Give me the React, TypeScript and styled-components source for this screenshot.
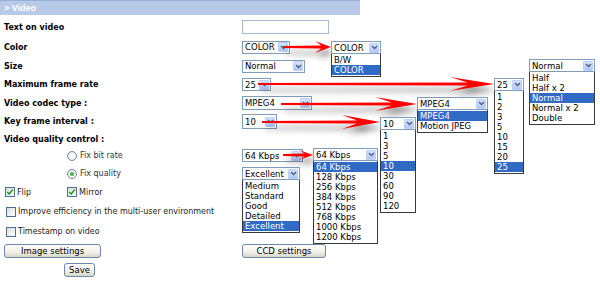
import React from "react";
import styled, { createGlobalStyle } from "styled-components";

const GlobalStyle = createGlobalStyle`
  body {
    margin: 0;
    background: #fff;
  }
`;

const Page = styled.div`
  position: relative;
  width: 600px;
  height: 285px;
  overflow: hidden;
  background: #fff;
  color: #000;
  font-family: "DejaVu Sans", Verdana, sans-serif;
`;

const Header = styled.div`
  width: 360px;
  height: 15px;
  box-sizing: border-box;
  display: flex;
  align-items: center;
  padding-left: 4px;
  background: #b8cae8;
  border-top: 1px solid #98afd7;
  color: #fff;
  font: bold 9px "Liberation Sans", Arial, sans-serif;
`;

const Row = styled.div<{ $h: number; $top?: number }>`
  display: grid;
  grid-template-columns: 242px 1fr;
  align-items: center;
  height: ${({ $h }) => $h}px;
  margin-top: ${({ $top }) => $top || 0}px;
`;

const Label = styled.div`
  padding-left: 4px;
  font-size: 8px;
  font-weight: bold;
  white-space: nowrap;
`;

const Cell = styled.div<{ $indent?: number }>`
  position: relative;
  display: flex;
  align-items: center;
  padding-left: ${({ $indent }) => $indent || 0}px;
  font-size: 8px;
  white-space: nowrap;
`;

const TextBox = styled.div`
  width: 87px;
  height: 14px;
  box-sizing: border-box;
  border: 1px solid #a5b9d5;
  background: #fff;
`;

const SelectBox = styled.div<{ $w: number; $h?: number }>`
  width: ${({ $w }) => $w}px;
  height: ${({ $h }) => $h || 13}px;
  box-sizing: border-box;
  display: flex;
  align-items: center;
  justify-content: space-between;
  padding: 0 1px 0 2px;
  border: 1px solid #7f9db9;
  background: #fff;
  font-size: 8.5px;
  line-height: 10px;
`;

const ArrowBtn = styled.span`
  width: 10px;
  height: 10px;
  box-sizing: border-box;
  display: flex;
  align-items: center;
  justify-content: center;
  background: linear-gradient(#d6e2fe, #b3c8f8);
  border: 1px solid #bccefb;
  border-radius: 1px;
`;

const ListBox = styled.div<{ $w: number }>`
  width: ${({ $w }) => $w}px;
  box-sizing: border-box;
  border: 1px solid #3a3a3a;
  border-top: none;
  background: #fff;
  padding: 1px 0;
`;

const Item = styled.div<{ $sel: boolean; $ih: number }>`
  height: ${({ $ih }) => $ih}px;
  line-height: ${({ $ih }) => $ih}px;
  padding-left: 2px;
  font-size: 8.5px;
  white-space: nowrap;
  background: ${({ $sel }) => ($sel ? "#316ac5" : "transparent")};
  color: ${({ $sel }) => ($sel ? "#fff" : "#000")};
`;

const Floating = styled.div<{ $x: number; $y: number }>`
  position: absolute;
  left: ${({ $x }) => $x}px;
  top: ${({ $y }) => $y}px;
  font-family: "DejaVu Sans", Verdana, sans-serif;
  z-index: 2;
`;

const BelowList = styled.div`
  position: absolute;
  left: 0;
  top: 100%;
  z-index: 1;
`;

const CheckItem = styled.label<{ $w?: number }>`
  display: flex;
  align-items: center;
  gap: 2px;
  width: ${({ $w }) => ($w ? `${$w}px` : "auto")};
  font-size: 8px;
  color: #222;
`;

const Box = styled.span`
  width: 10px;
  height: 10px;
  box-sizing: border-box;
  display: inline-flex;
  align-items: center;
  justify-content: center;
  border: 1px solid #4f6d99;
  background: linear-gradient(135deg, #dcdcd6, #fff);
`;

const RadioDot = styled.span`
  width: 10px;
  height: 10px;
  box-sizing: border-box;
  display: inline-flex;
  align-items: center;
  justify-content: center;
  border: 1px solid #6f88ad;
  border-radius: 50%;
  background: radial-gradient(circle at 60% 60%, #fff, #e4e4de);
  margin-right: 3px;
`;

const Dot = styled.span`
  width: 4px;
  height: 4px;
  border-radius: 50%;
  background: #3cb43c;
`;

const Radio = styled.div`
  display: flex;
  align-items: center;
  font-size: 8px;
  color: #333;
`;

const Button = styled.div<{ $w: number }>`
  width: ${({ $w }) => $w}px;
  height: 14px;
  box-sizing: border-box;
  display: flex;
  align-items: center;
  justify-content: center;
  border: 1px solid #6e87ab;
  border-radius: 3px;
  background: linear-gradient(#fefefe, #f2f1ea 60%, #d9d6c9);
  font-size: 8.5px;
  color: #000;
`;

const Overlay = styled.svg`
  position: absolute;
  left: 0;
  top: 0;
  pointer-events: none;
  z-index: 1;
`;

const Chevron = () => (
  <svg width="7" height="5" viewBox="0 0 7 5">
    <path d="M1 1 L3.5 3.5 L6 1" fill="none" stroke="#4d6185" strokeWidth="1.5" />
  </svg>
);

const Tick = () => (
  <svg width="8" height="8" viewBox="0 0 8 8">
    <path d="M1.3 4 L3.2 6 L6.8 1.6" fill="none" stroke="#21a121" strokeWidth="1.6" />
  </svg>
);

type SelectProps = { value: string; w: number; h?: number };

const Select = ({ value, w, h }: SelectProps) => (
  <SelectBox $w={w} $h={h}>
    <span>{value}</span>
    <ArrowBtn>
      <Chevron />
    </ArrowBtn>
  </SelectBox>
);

type ListProps = { items: string[]; sel: number; w: number; ih?: number };

const List = ({ items, sel, w, ih = 10 }: ListProps) => (
  <ListBox $w={w}>
    {items.map((it, i) => (
      <Item key={it} $sel={i === sel} $ih={ih}>
        {it}
      </Item>
    ))}
  </ListBox>
);

const dropdowns = [
  { x: 331, y: 41, w: 50, ih: 10, sel: 1, items: ["B/W", "COLOR"] },
  { x: 529, y: 59, w: 66, ih: 10, sel: 2, items: ["Half", "Half x 2", "Normal", "Normal x 2", "Double"] },
  { x: 494, y: 78, w: 30, ih: 10, sel: 7, items: ["1", "2", "3", "5", "10", "15", "20", "25"] },
  { x: 417, y: 97, w: 71, ih: 10, sel: 0, items: ["MPEG4", "Motion JPEG"] },
  { x: 380, y: 117, w: 36, ih: 10, sel: 3, items: ["1", "3", "5", "10", "30", "60", "90", "120"] },
  {
    x: 313, y: 148, w: 65, ih: 10, sel: 0,
    items: ["64 Kbps", "128 Kbps", "256 Kbps", "384 Kbps", "512 Kbps", "768 Kbps", "1000 Kbps", "1200 Kbps"],
  },
];

// red callout arrows: tail x, tip x, y, head length, head half-height
const arrows = [
  { x0: 283, x1: 331, y: 47, head: 16, half: 6 },
  { x0: 258, x1: 494, y: 84, head: 44, half: 7 },
  { x0: 281, x1: 417, y: 104, head: 42, half: 7 },
  { x0: 262, x1: 380, y: 122, head: 38, half: 7 },
  { x0: 283, x1: 313, y: 155, head: 14, half: 5 },
];

const arrowPoints = (a: (typeof arrows)[number]) => {
  const xh = a.x1 - a.head;
  const notch = xh + a.head * 0.4;
  return [
    [a.x0, a.y - 1],
    [notch, a.y - 1.5],
    [xh, a.y - a.half],
    [a.x1, a.y],
    [xh, a.y + a.half],
    [notch, a.y + 1.5],
    [a.x0, a.y + 1],
  ]
    .map((p) => p.join(","))
    .join(" ");
};

const App: React.FC = () => {
  return (
    <Page>
      <GlobalStyle />
      <Header>&gt; Video</Header>

      <Row $h={20} $top={2}>
        <Label>Text on video</Label>
        <Cell>
          <TextBox />
        </Cell>
      </Row>
      <Row $h={20}>
        <Label>Color</Label>
        <Cell>
          <Select value="COLOR" w={48} />
        </Cell>
      </Row>
      <Row $h={18}>
        <Label>Size</Label>
        <Cell>
          <Select value="Normal" w={63} />
        </Cell>
      </Row>
      <Row $h={19}>
        <Label>Maximum frame rate</Label>
        <Cell>
          <Select value="25" w={29} />
        </Cell>
      </Row>
      <Row $h={18}>
        <Label>Video codec type :</Label>
        <Cell>
          <Select value="MPEG4" w={70} h={14} />
        </Cell>
      </Row>
      <Row $h={19}>
        <Label>Key frame interval :</Label>
        <Cell>
          <Select value="10" w={35} h={15} />
        </Cell>
      </Row>
      <Row $h={16}>
        <Label>Video quality control :</Label>
        <Cell />
      </Row>
      <Row $h={17}>
        <Cell $indent={67}>
          <Radio>
            <RadioDot />
            Fix bit rate
          </Radio>
        </Cell>
        <Cell>
          <Select value="64 Kbps" w={61} />
        </Cell>
      </Row>
      <Row $h={19}>
        <Cell $indent={67}>
          <Radio>
            <RadioDot>
              <Dot />
            </RadioDot>
            Fix quality
          </Radio>
        </Cell>
        <Cell>
          <Select value="Excellent" w={58} />
          <BelowList>
            <List items={["Medium", "Standard", "Good", "Detailed", "Excellent"]} sel={4} w={58} />
          </BelowList>
        </Cell>
      </Row>
      <Row $h={18}>
        <Cell $indent={5}>
          <CheckItem $w={62}>
            <Box>
              <Tick />
            </Box>
            Flip
          </CheckItem>
          <CheckItem>
            <Box>
              <Tick />
            </Box>
            Mirror
          </CheckItem>
        </Cell>
        <Cell />
      </Row>
      <Row $h={21}>
        <Cell $indent={6}>
          <CheckItem>
            <Box />
            Improve efficiency in the multi-user environment
          </CheckItem>
        </Cell>
        <Cell />
      </Row>
      <Row $h={19}>
        <Cell $indent={6}>
          <CheckItem>
            <Box />
            Timestamp on video
          </CheckItem>
        </Cell>
        <Cell />
      </Row>
      <Row $h={19}>
        <Cell $indent={4}>
          <Button $w={97}>Image settings</Button>
        </Cell>
        <Cell>
          <Button $w={84}>CCD settings</Button>
        </Cell>
      </Row>
      <Row $h={20}>
        <Cell $indent={64}>
          <Button $w={31}>Save</Button>
        </Cell>
        <Cell />
      </Row>

      <Overlay width={600} height={285} viewBox="0 0 600 285">
        <defs>
          <filter id="soft" x="-10%" y="-100%" width="120%" height="300%">
            <feGaussianBlur stdDeviation="3" />
          </filter>
        </defs>
        {arrows.map((a, i) => (
          <g key={i}>
            <polygon
              points={arrowPoints(a)}
              fill="#000"
              opacity={0.45}
              filter="url(#soft)"
              transform="translate(3 6)"
            />
            <polygon points={arrowPoints(a)} fill="#ff0000" />
          </g>
        ))}
      </Overlay>

      {dropdowns.map((d) => (
        <Floating key={d.x} $x={d.x} $y={d.y}>
          <Select value={d.items[d.sel]} w={d.w} />
          <List items={d.items} sel={d.sel} w={d.w} ih={d.ih} />
        </Floating>
      ))}
    </Page>
  );
};

export default App;
